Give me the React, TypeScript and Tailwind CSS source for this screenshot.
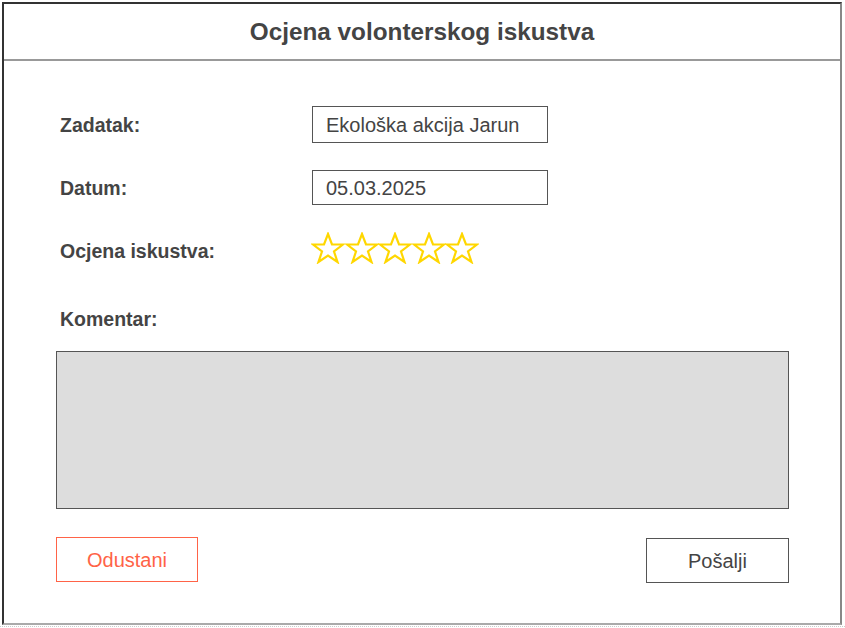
import React from "react";

function Star() {
  return (
    <svg width="34" height="32" viewBox="0 0 34 32">
      <polygon
        points="17,2 21,12.5 32,12.5 23,19.5 26.5,30 17,23.5 7.5,30 11,19.5 2,12.5 13,12.5"
        fill="none"
        stroke="#FFD700"
        strokeWidth="2.2"
        strokeLinejoin="miter"
      />
    </svg>
  );
}

export default function App() {
  return (
    <div className="w-[845px] h-[628px] bg-white pt-[2px] pl-[2px]" style={{ fontFamily: '"Liberation Sans", Arial, sans-serif' }}>
      <div className="w-[840px] h-[623px] border-l-2 border-t-2 border-[#333] border-r-2 border-r-[#888] border-b-2 border-b-[#aaa] flex flex-col">
        <div className="h-[57px] border-b-2 border-[#999] flex items-center justify-center">
          <h1 className="text-[24.3px] font-bold text-[#444] leading-none pt-[1px]">Ocjena volonterskog iskustva</h1>
        </div>
        <div className="flex flex-col pl-[52px] pr-[52px] text-[#444]">
          <div className="flex items-center mt-[45px] h-[37px]">
            <div className="w-[256px] pl-[4px] text-[19.5px] font-bold pt-[2px]">Zadatak:</div>
            <div className="w-[236px] h-[37px] border border-[#555] flex items-center pl-[13px] text-[20px]">Ekološka akcija Jarun</div>
          </div>
          <div className="flex items-center mt-[27px] h-[35px]">
            <div className="w-[256px] pl-[4px] text-[19.5px] font-bold pt-[3px]">Datum:</div>
            <div className="w-[236px] h-[35px] border border-[#555] flex items-center pl-[13px] text-[20px]">05.03.2025</div>
          </div>
          <div className="flex items-center mt-[26px] h-[34px]">
            <div className="w-[256px] pl-[4px] text-[19.5px] font-bold pt-[7px]">Ocjena iskustva:</div>
            <div className="flex -ml-[1px] -space-x-[0.5px]">
              <Star />
              <Star />
              <Star />
              <Star />
              <Star />
            </div>
          </div>
          <div className="mt-[44px] pl-[4px] text-[19.5px] font-bold leading-[20px]">Komentar:</div>
          <div className="mt-[22px] w-[733px] h-[158px] bg-[#ddd] border border-[#555]"></div>
          <div className="flex justify-between mt-[28px] w-[733px]">
            <button className="w-[142px] h-[45px] border border-[#ff6347] text-[#ff6347] text-[20px] flex items-center justify-center">Odustani</button>
            <button className="w-[143px] h-[45px] mt-[1px] border border-[#555] text-[#444] text-[20px] flex items-center justify-center">Pošalji</button>
          </div>
        </div>
      </div>
      <div className="-ml-[2px] mt-[1px] w-[845px] border-t border-dotted border-[#ccc]"></div>
    </div>
  );
}
